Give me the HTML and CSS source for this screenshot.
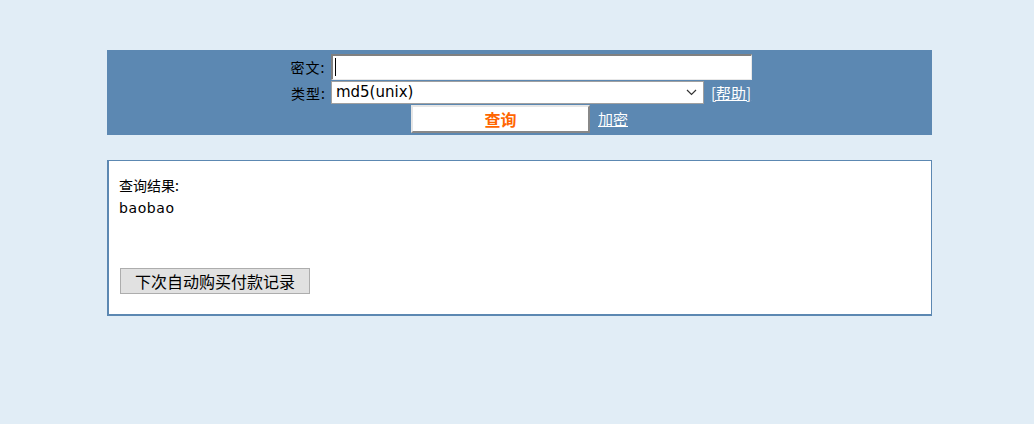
FILE: index.html
```html
<!DOCTYPE html>
<html lang="zh-CN">
<head>
<meta charset="utf-8">
<title>查询</title>
<link rel="stylesheet" href="styles.css">
</head>
<body>
<div class="wrap">
  <form class="panel">
    <div class="row row-input">
      <span class="label">密文:</span>
      <span class="text-input"><span class="caret"></span></span>
    </div>
    <div class="row row-select">
      <span class="label">类型:</span>
      <span class="select">md5(unix)
        <svg class="chev" width="11" height="7" viewBox="0 0 11 7"><path d="M1 1 L5.5 5.5 L10 1" fill="none" stroke="#333" stroke-width="1.2"/></svg>
      </span>
      <a class="link" href="#">[帮助]</a>
    </div>
    <div class="row row-btn">
      <button type="button" class="query-btn">查询</button>
      <a class="link" href="#">加密</a>
    </div>
  </form>
  <div class="result">
    <div class="result-title">查询结果:</div>
    <div class="result-value">baobao</div>
    <button type="button" class="record-btn">下次自动购买付款记录</button>
  </div>
</div>
</body>
</html>
```
FILE: styles.css
```css
html, body {
  margin: 0;
  padding: 0;
  background: #e1edf6;
}
body {
  font-family: "Noto Sans CJK SC", "DejaVu Sans", sans-serif;
  font-size: 14px;
  color: #000;
}
.wrap {
  width: 825px;
  margin: 50px 0 0 107px;
}
.panel {
  background: #5c88b2;
  height: 85px;
  box-sizing: border-box;
  padding-top: 4px;
  margin: 0;
  display: flex;
  flex-direction: column;
  align-items: center;
  gap: 1px;
}
.row {
  display: flex;
  align-items: center;
  gap: 5px;
}
.row-input { height: 26px; }
.row-select { height: 23px; }
.row-btn { height: 28px; }
.label {
  font-size: 14px;
  line-height: 16px;
  width: 38px;
  text-align: right;
  white-space: nowrap;
  letter-spacing: 1px;
}
.text-input {
  display: block;
  width: 421px;
  height: 26px;
  box-sizing: border-box;
  background: #fff;
  border: 2px solid #808080;
  border-right-color: #e8e8e8;
  border-bottom-color: #e8e8e8;
  border-right-width: 1px;
  border-bottom-width: 1px;
  position: relative;
}
.caret {
  position: absolute;
  left: 2px;
  top: 2px;
  width: 1px;
  height: 18px;
  background: #000;
}
.select {
  display: flex;
  align-items: center;
  justify-content: space-between;
  width: 373px;
  height: 23px;
  box-sizing: border-box;
  background: #fff;
  border: 1px solid #a0a0a0;
  padding: 0 6px 0 4px;
  font-family: "DejaVu Sans", sans-serif;
  font-size: 15px;
  line-height: 21px;
}
.chev {
  display: block;
}
.link {
  color: #fff;
  text-decoration: underline;
  font-size: 15px;
  line-height: 18px;
  margin-left: 2px;
  white-space: nowrap;
}
.query-btn {
  width: 179px;
  height: 28px;
  box-sizing: border-box;
  background: #fff;
  border: 2px solid;
  border-color: #e6e6e6 #888 #888 #e6e6e6;
  color: #ff6600;
  font-family: "Noto Sans CJK SC", sans-serif;
  font-weight: bold;
  font-size: 16px;
  line-height: 22px;
  padding: 0;
  margin: 0 1px 0 0;
}
.result {
  margin-top: 25px;
  height: 156px;
  box-sizing: border-box;
  background: #fff;
  border: 1px solid #5c88b2;
  border-left-width: 2px;
  border-bottom-width: 2px;
  padding: 15px 0 0 10px;
}
.result-title {
  font-size: 14px;
  line-height: 18px;
}
.result-value {
  font-family: "DejaVu Sans", sans-serif;
  font-size: 14px;
  letter-spacing: 0.6px;
  line-height: 20px;
  margin-top: 4px;
}
.record-btn {
  display: block;
  margin: 50px 0 0 1px;
  width: 190px;
  height: 26px;
  box-sizing: border-box;
  background: #e1e1e1;
  border: 1px solid #adadad;
  font-family: "Noto Sans CJK SC", sans-serif;
  font-size: 16px;
  line-height: 22px;
  padding: 0;
  color: #000;
}
```
